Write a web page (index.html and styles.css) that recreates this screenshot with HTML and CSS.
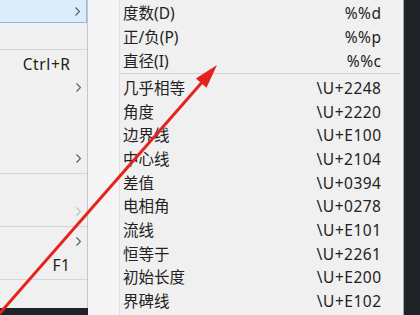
FILE: index.html
```html
<!DOCTYPE html>
<html lang="zh-CN">
<head>
    <meta charset="UTF-8">
    <title>插入符号</title>
    <link rel="stylesheet" href="styles.css">
</head>
<body>
    <div class="screen">
        <!-- parent context menu, only its right edge is on screen -->
        <div class="menu">
            <div class="item active"><span class="key"></span><span class="sub"><svg class="chev" viewBox="0 0 5 9"><path d="M0.5 0.5 4.5 4.5 0.5 8.5"/></svg></span></div>
            <div class="item"><span class="key"></span><span class="sub"></span></div>
            <div class="sep"></div>
            <div class="item"><span class="key">Ctrl+R</span><span class="sub"></span></div>
            <div class="item"><span class="key"></span><span class="sub"><svg class="chev" viewBox="0 0 5 9"><path d="M0.5 0.5 4.5 4.5 0.5 8.5"/></svg></span></div>
            <div class="item"><span class="key"></span><span class="sub"></span></div>
            <div class="item"><span class="key"></span><span class="sub"></span></div>
            <div class="item"><span class="key"></span><span class="sub"><svg class="chev" viewBox="0 0 5 9"><path d="M0.5 0.5 4.5 4.5 0.5 8.5"/></svg></span></div>
            <div class="sep"></div>
            <div class="item"><span class="key"></span><span class="sub"></span></div>
            <div class="item disabled"><span class="key"></span><span class="sub"><svg class="chev" viewBox="0 0 5 9"><path d="M0.5 0.5 4.5 4.5 0.5 8.5"/></svg></span></div>
            <div class="sep"></div>
            <div class="item"><span class="key"></span><span class="sub"><svg class="chev" viewBox="0 0 5 9"><path d="M0.5 0.5 4.5 4.5 0.5 8.5"/></svg></span></div>
            <div class="item"><span class="key">F1</span><span class="sub"></span></div>
            <div class="sep"></div>
            <div class="item"><span class="key"></span><span class="sub"></span></div>
        </div>

        <!-- symbol submenu -->
        <div class="submenu">
            <div class="gutter"></div>
            <ul class="list">
                <li class="row"><span>度数(D)</span><span class="code">%%d</span></li>
                <li class="row"><span>正/负(P)</span><span class="code">%%p</span></li>
                <li class="row"><span>直径(I)</span><span class="code">%%c</span></li>
                <li class="sep"></li>
                <li class="row"><span>几乎相等</span><span class="code">\U+2248</span></li>
                <li class="row"><span>角度</span><span class="code">\U+2220</span></li>
                <li class="row"><span>边界线</span><span class="code">\U+E100</span></li>
                <li class="row"><span>中心线</span><span class="code">\U+2104</span></li>
                <li class="row"><span>差值</span><span class="code">\U+0394</span></li>
                <li class="row"><span>电相角</span><span class="code">\U+0278</span></li>
                <li class="row"><span>流线</span><span class="code">\U+E101</span></li>
                <li class="row"><span>恒等于</span><span class="code">\U+2261</span></li>
                <li class="row"><span>初始长度</span><span class="code">\U+E200</span></li>
                <li class="row"><span>界碑线</span><span class="code">\U+E102</span></li>
            </ul>
        </div>
    </div>

    <!-- red annotation arrow drawn over the menus -->
    <svg class="pointer" viewBox="0 0 420 315">
        <line x1="-5" y1="318.7" x2="204" y2="80" />
        <polygon points="217,65 195.9,78.5 206.5,87.7" />
    </svg>
</body>
</html>
```

FILE: styles.css
```css
* {
    margin: 0;
    padding: 0;
    box-sizing: border-box;
}

body {
    width: 420px;
    height: 315px;
    overflow: hidden;
    position: relative;
    background: #1f2328;
    font-family: "Noto Sans", "Noto Sans CJK SC", sans-serif;
    font-size: 15.5px;
    color: #222;
}

.screen {
    display: flex;
    align-items: flex-start;
    height: 315px;
}

/* parent menu */
.menu {
    width: 88px;
    height: 309px;
    margin-top: -1px;
    flex-shrink: 0;
    display: flex;
    flex-direction: column;
    background: #f0f0f0;
    border-right: 1px solid #c6c6c6;
}

.item {
    height: 23.67px;
    flex-shrink: 0;
    display: flex;
    align-items: center;
    justify-content: flex-end;
    line-height: 20px;
}

.item.active {
    height: 24px;
    background: #dbecfb;
    border: 1px solid #86bdec;
    border-left: none;
}

.item .key {
    text-align: right;
    letter-spacing: 0.6px;
    margin-right: -0.6px;
}

.item .sub {
    width: 17px;
    display: flex;
    justify-content: center;
}

.chev {
    width: 5px;
    height: 9px;
    fill: none;
    stroke: #5a5a5a;
    stroke-width: 1.1;
}

.item.disabled .chev {
    stroke: #bcbcbc;
}

.sep {
    height: 5.67px;
    flex-shrink: 0;
    display: flex;
    align-items: center;
}

.sep::before {
    content: "";
    flex: 1;
    height: 1px;
    background: #d6d6d6;
}

/* submenu */
.submenu {
    width: 316px;
    height: 315px;
    flex-shrink: 0;
    display: flex;
    background: #f0f0f0;
    border-right: 1px solid #a3a3a3;
}

.gutter {
    width: 32px;
    background: #f5f5f5;
    border-right: 1px solid #e0e0e0;
}

.list {
    flex: 1;
    list-style: none;
    padding-top: 1.5px;
}

.row {
    height: 23.7px;
    display: flex;
    align-items: center;
    justify-content: space-between;
    padding: 0 22px 0 3px;
    line-height: 20px;
}

.row .code {
    letter-spacing: 0.5px;
    margin-right: -0.5px;
}

.list .sep {
    height: 3.55px;
    align-items: flex-start;
    margin-right: 3px;
}

.pointer {
    position: absolute;
    top: 0;
    left: 0;
    width: 420px;
    height: 315px;
    pointer-events: none;
}

.pointer line {
    stroke: #e5231d;
    stroke-width: 3;
}

.pointer polygon {
    fill: #e5231d;
}
```
